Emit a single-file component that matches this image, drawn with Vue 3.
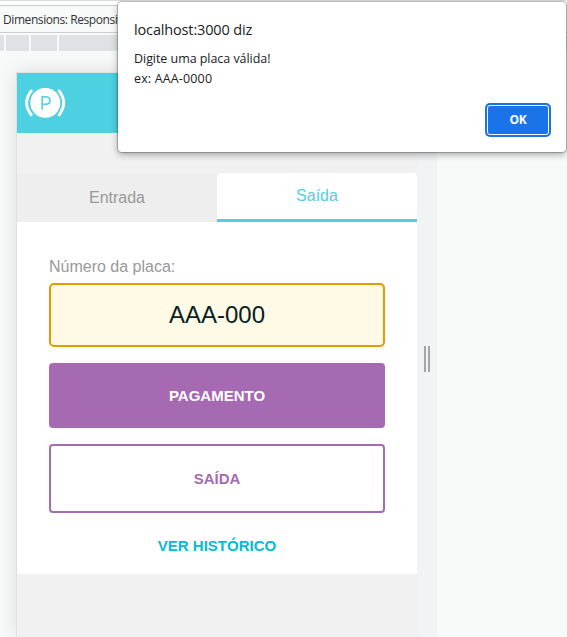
<script setup>
const queries = [4, 23, 26, 509]
const tabs = [
  { label: 'Entrada', active: false },
  { label: 'Saída', active: true },
]
</script>

<template>
  <div class="screen">
    <div class="topline"></div>
    <div class="toolbar"><span class="dimensions">Dimensions: Responsive</span></div>
    <div class="ruler">
      <i v-for="(w, i) in queries" :key="i" :style="{ width: w + 'px' }"></i>
    </div>

    <div class="stage">
      <main class="device">
        <header class="header">
          <svg class="logo" width="42" height="32" viewBox="0 0 42 32">
            <circle cx="20.3" cy="14.8" r="15" fill="#fff" />
            <path d="M6.2 3Q-3 14.8 6.2 26.8M34.2 3Q43.2 14.8 34.2 26.8" fill="none" stroke="#4dd0e1" stroke-width="5" />
            <path d="M6.2 3Q-3 14.8 6.2 26.8M34.2 3Q43.2 14.8 34.2 26.8" fill="none" stroke="#fff" stroke-width="2.9" stroke-linecap="round" />
            <path d="M17.2 21.4V8.8H20.8Q25 8.8 25 12.5T20.8 16.2H17.2" fill="none" stroke="#4dd0e1" stroke-width="1.6" />
          </svg>
        </header>
        <nav class="tabs">
          <div v-for="tab in tabs" :key="tab.label" class="tab" :class="{ active: tab.active }">{{ tab.label }}</div>
        </nav>
        <section class="form">
          <label class="label">Número da placa:</label>
          <div class="plate">AAA-000</div>
          <button class="btn filled">PAGAMENTO</button>
          <button class="btn outline">SAÍDA</button>
          <a class="history">VER HISTÓRICO</a>
        </section>
      </main>
      <div class="resizer"><i></i><i></i></div>
    </div>

    <div class="dialog">
      <div class="title">localhost:3000 diz</div>
      <div class="message">Digite uma placa válida!</div>
      <div class="message example">ex: AAA-0000</div>
      <button class="ok">OK</button>
    </div>
  </div>
</template>

<style>
body { margin: 0; overflow: hidden; }
</style>

<style scoped>
* { box-sizing: border-box; }
.screen {
  position: relative;
  width: 567px;
  height: 637px;
  overflow: hidden;
  background: #f8faf9;
  font-family: "Liberation Sans", Arial, sans-serif;
}
.topline { height: 6px; background: #fff; border-top: 1px solid #dcdcdc; border-bottom: 1px solid #cacdd1; }
.toolbar {
  height: 27px;
  padding-left: 3px;
  border-bottom: 1px solid #cacdd1;
  background: #f8faf9;
  font: 12px/27px "Open Sans", sans-serif;
  color: #303236;
  white-space: nowrap;
}
.dimensions { letter-spacing: -0.42px; }
.ruler { display: flex; gap: 2px; height: 18px; padding-top: 2px; }
.ruler i { flex: none; background: #dee1e6; }
.stage { display: flex; height: 586px; padding: 22px 0 0 17px; }
.device {
  width: 400px;
  height: 564px;
  background: #f1f1f1;
  box-shadow: 0 0 0 1px #dfe1e1, 0 0 20px rgba(0, 0, 0, 0.13);
}
.header { height: 60px; padding: 15px 8px; background: #4dd0e1; }
.logo { display: block; }
.tabs { display: flex; height: 49px; margin-top: 40px; background: #eee; }
.tab { width: 200px; height: 49px; line-height: 49px; text-align: center; font-size: 16px; color: #999; }
.tab.active {
  line-height: 46px;
  color: #4dd0e1;
  background: #fff;
  border-bottom: 3px solid #4dd0e1;
  border-radius: 4px 4px 0 0;
}
.form { display: flex; flex-direction: column; height: 352px; padding: 35px 32px 0; background: #fff; }
.label { height: 26px; font-size: 16px; line-height: 20px; color: #999; }
.plate {
  height: 64px;
  border: 2px solid #e59a00;
  border-radius: 5px;
  background: #fffae6;
  font-size: 24px;
  line-height: 60px;
  text-align: center;
  color: #07211f;
}
.btn { padding: 0; border-radius: 4px; font: bold 15px "Liberation Sans", Arial, sans-serif; }
.filled { height: 65px; margin-top: 16px; border: 0; background: #a66ab2; color: #fff; }
.outline { height: 69px; margin-top: 16px; border: 2px solid #a66ab2; background: #fff; color: #a66ab2; }
.history { margin-top: 23px; text-align: center; font-size: 15px; line-height: 20px; font-weight: bold; color: #00bcd4; }
.resizer {
  position: relative;
  display: flex;
  justify-content: center;
  align-items: flex-start;
  gap: 2px;
  width: 20px;
  padding-top: 273px;
  background: #f1f3f5;
}
.resizer i { width: 2px; height: 26px; background: #a5a5a5; }
.dialog {
  position: absolute;
  left: 118px;
  top: 2px;
  width: 448px;
  height: 150px;
  padding: 17px 16px 0;
  border-radius: 4px;
  background: #fff;
  box-shadow: 0 0 1px 1px rgba(0, 0, 0, 0.25), 0 3px 7px rgba(0, 0, 0, 0.3);
  font-family: "Open Sans", sans-serif;
  color: #202124;
}
.title { height: 30px; font-size: 14.5px; line-height: 22px; letter-spacing: -0.15px; }
.message { font-size: 12.5px; line-height: 20px; letter-spacing: -0.05px; }
.example { letter-spacing: 0.15px; }
.ok {
  display: block;
  width: 62px;
  height: 30px;
  margin: 16px 1px 0 auto;
  padding: 0 0 1px;
  border: 1px solid #fff;
  border-radius: 3px;
  background: #1a73e8;
  box-shadow: 0 0 0 2px #1a73e8;
  color: #fff;
  font: bold 12px "Open Sans", sans-serif;
  letter-spacing: -0.3px;
}
</style>
